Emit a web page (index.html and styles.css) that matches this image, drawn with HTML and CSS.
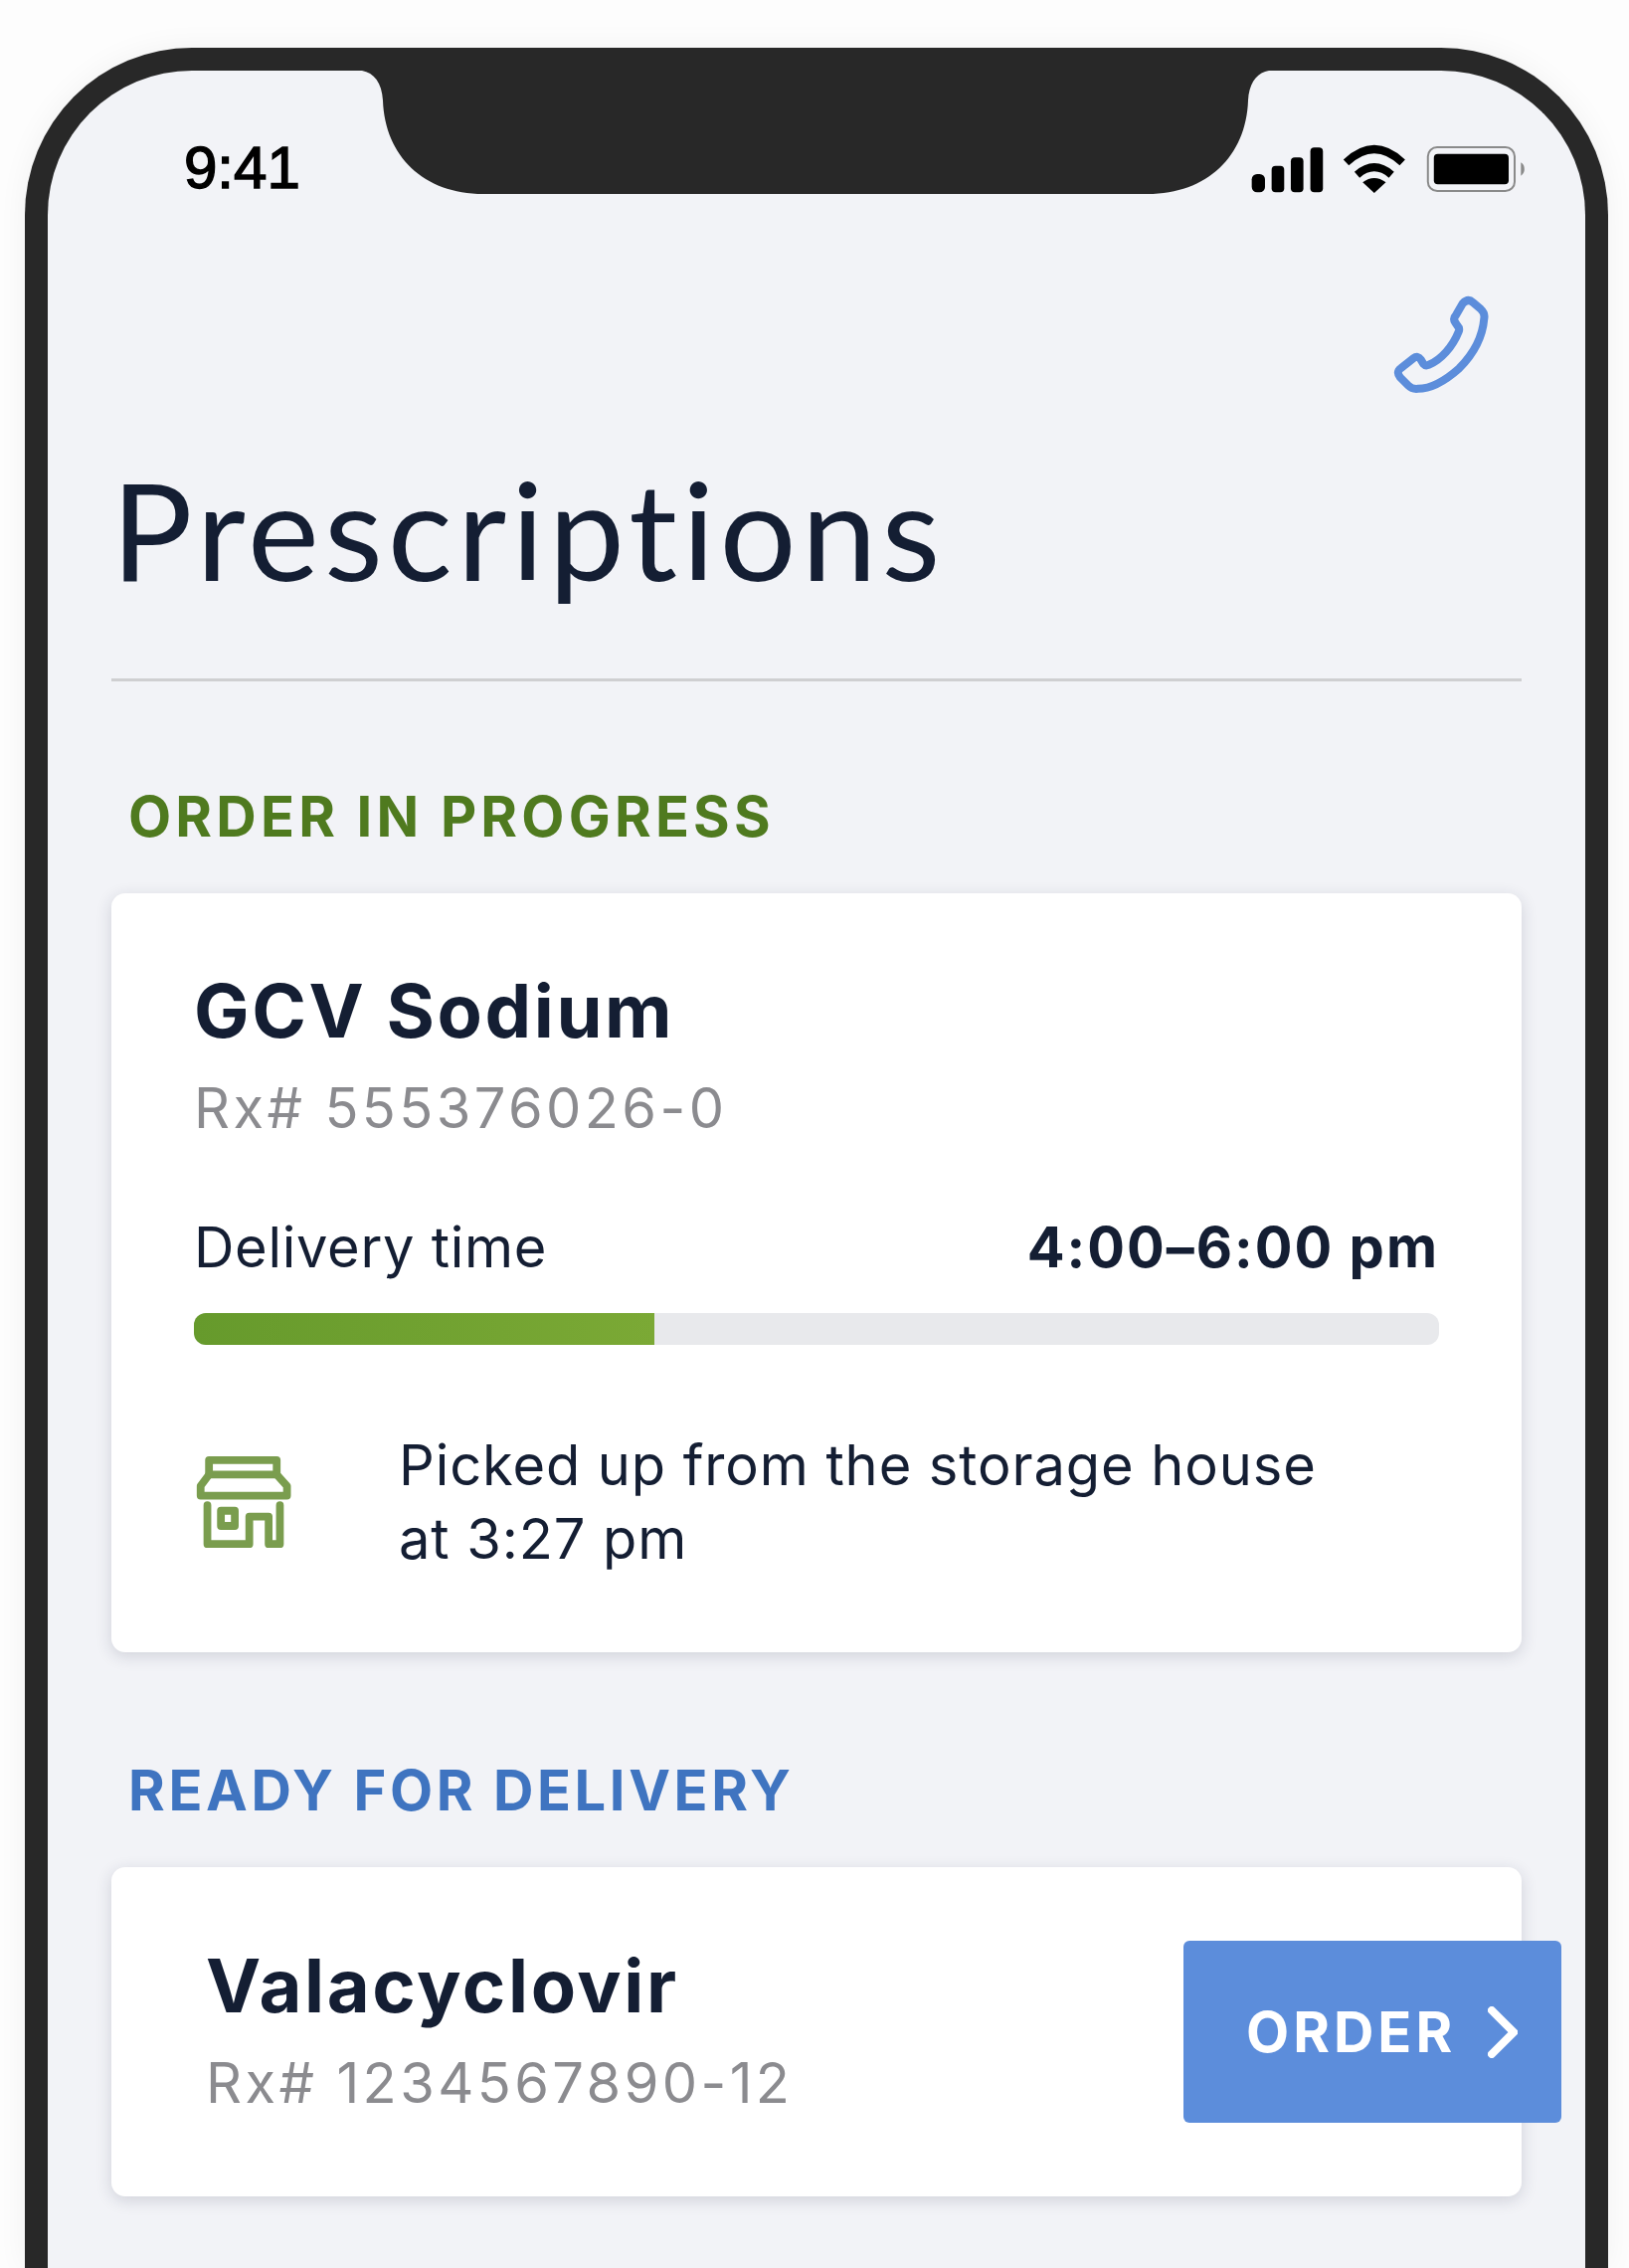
FILE: index.html
```html
<!DOCTYPE html>
<html lang="en">
<head>
    <meta charset="UTF-8">
    <meta name="viewport" content="width=device-width, initial-scale=1.0">
    <title>Prescriptions</title>
    <link rel="stylesheet" href="styles.css">
</head>
<body>
    <div class="phone">
        <svg class="notch" viewBox="0 0 912 124" aria-hidden="true">
            <path d="M0 0 C12 2 20 12 21 30 C23 86 62 124 122 124 H790 C850 124 889 86 891 30 C892 12 900 2 912 0 Z"/>
        </svg>
        <div class="screen">
            <div class="status">
                <span class="clock">9:41</span>
                <svg class="status-icons" viewBox="230 425 835 150" aria-hidden="true">
                    <rect x="235" y="515" width="40" height="55" rx="16"/>
                    <rect x="295" y="490" width="38" height="80" rx="12"/>
                    <rect x="353" y="465" width="38" height="105" rx="12"/>
                    <rect x="412" y="435" width="38" height="135" rx="12"/>
                    <path class="wifi" d="M520 480 Q605 400 690 480"/>
                    <path class="wifi" d="M553 517 Q605 472 657 517"/>
                    <path d="M570 540 Q605 514 640 540 L605 572 Z"/>
                    <rect class="batt" x="767" y="434" width="262" height="132" rx="28"/>
                    <rect x="785" y="454" width="226" height="92" rx="12"/>
                    <path class="nub" d="M1048 480 C1062 488 1062 512 1048 520 Z"/>
                </svg>
            </div>
            <div class="call-row">
                <svg class="call" viewBox="655 885 300 305" aria-hidden="true">
                    <path d="M870 915 Q886 898 902 912 L925 932 Q938 944 935 960 C930 1020 900 1070 860 1110 C815 1150 775 1172 735 1172 Q718 1174 706 1162 L682 1138 Q668 1122 684 1110 L722 1080 Q735 1070 744 1084 L752 1097 Q758 1104 768 1100 C805 1085 840 1045 858 1000 Q862 990 856 984 L848 972 Q840 960 850 950 Z"/>
                </svg>
            </div>
            <h1>Prescriptions</h1>
            <hr class="rule">

            <h2 class="section-label green">ORDER IN PROGRESS</h2>
            <div class="card card-progress">
                <div class="drug">GCV Sodium</div>
                <div class="rx">Rx# 555376026-0</div>
                <div class="delivery">
                    <span>Delivery time</span>
                    <strong>4:00–6:00 pm</strong>
                </div>
                <div class="bar"><div class="bar-fill" style="width: 37%"></div></div>
                <div class="update">
                    <svg class="store" viewBox="110 125 295 290" aria-hidden="true">
                        <path d="M150 185 V140 H360 V185 Z"/>
                        <path d="M150 185 L124 220 V250 H392 V220 L360 185"/>
                        <path d="M145 280 V400 H275 V315 H335 V400 H370 V280"/>
                        <rect x="187" y="297" width="43" height="47"/>
                    </svg>
                    <p>Picked up from the storage house<br>at 3:27 pm</p>
                </div>
            </div>

            <h2 class="section-label blue">READY FOR DELIVERY</h2>
            <div class="card card-ready">
                <div class="ready-info">
                    <div class="drug">Valacyclovir</div>
                    <div class="rx">Rx# 1234567890-12</div>
                </div>
                <button class="order" type="button">
                    ORDER
                    <svg class="chevron" viewBox="0 0 30 52" aria-hidden="true"><path d="M4 4 L26 26 L4 48"/></svg>
                </button>
            </div>
        </div>
    </div>
</body>
</html>
```

FILE: styles.css
```css
* {
    box-sizing: border-box;
}

body {
    margin: 0;
    height: 2280px;
    overflow: hidden;
    background-color: #fdfdfd;
    font-family: Inter, "Liberation Sans", sans-serif;
    color: #141e33;
}

.phone {
    position: relative;
    width: 1592px;
    height: 2232px;
    margin: 48px 0 0 25px;
    border: 23px solid #282828;
    border-bottom: none;
    border-radius: 168px 168px 0 0;
    background-color: #f2f3f7;
    box-shadow: 0 0 30px rgba(0, 0, 0, 0.05);
}

.notch {
    position: absolute;
    top: 0;
    left: 316px;
    width: 912px;
    height: 124px;
    fill: #282828;
}

.screen {
    padding: 0 64px;
}

/* status bar */
.status {
    display: flex;
    justify-content: space-between;
    align-items: flex-start;
    height: 129px;
    padding: 64px 0 0 73px;
}

.clock {
    font-family: "Liberation Sans", sans-serif;
    font-size: 60px;
    line-height: 68px;
    color: #000;
    -webkit-text-stroke: 1.5px #000;
}

.status-icons {
    width: 278px;
    height: 50px;
    margin: 10px -5px 0 0;
}

.wifi {
    fill: none;
    stroke: #000;
    stroke-width: 24px;
}

.batt {
    fill: none;
    stroke: #8a8a8a;
    stroke-width: 6px;
}

.nub {
    fill: #8a8a8a;
}

.call-row {
    display: flex;
    justify-content: flex-end;
    padding: 95px 31px 0 0;
}

.call {
    width: 100px;
    height: 102px;
    fill: none;
    stroke: #5c8ddb;
    stroke-width: 24px;
    stroke-linejoin: round;
}

h1 {
    margin: 55px 0 0;
    font-family: Lato, sans-serif;
    font-size: 136px;
    font-weight: 400;
    line-height: 160px;
    letter-spacing: 5px;
    color: #141e33;
}

.rule {
    height: 3px;
    margin: 70px 0 0;
    border: none;
    background-color: #cfcfd1;
}

.section-label {
    margin: 0;
    padding: 0 0 0 17px;
    font-size: 56px;
    font-weight: 700;
    line-height: 64px;
    letter-spacing: 4.2px;
}

.green {
    margin-top: 104px;
    color: #4f7a1f;
}

.blue {
    margin-top: 107px;
    letter-spacing: 3.6px;
    color: #3f74c0;
}

.card {
    margin-top: 45px;
    background-color: #fff;
    border-radius: 14px;
    box-shadow: 0 4px 16px rgba(30, 40, 70, 0.16);
}

.card-progress {
    height: 763px;
    padding: 78px 83px 0;
}

.drug {
    font-size: 74px;
    font-weight: 700;
    line-height: 80px;
    letter-spacing: 2.6px;
    color: #141e33;
}

.rx {
    margin-top: 26px;
    font-size: 56px;
    line-height: 64px;
    letter-spacing: 3.4px;
    color: #8b8b8f;
}

.delivery {
    display: flex;
    justify-content: space-between;
    margin-top: 76px;
    font-size: 56px;
    line-height: 64px;
    letter-spacing: 0.7px;
}

.delivery strong {
    font-weight: 700;
    letter-spacing: 2px;
}

.bar {
    height: 32px;
    margin-top: 34px;
    overflow: hidden;
    background-color: #e8e9ec;
    border-radius: 12px;
}

.bar-fill {
    height: 100%;
    background: linear-gradient(90deg, #669a2c, #7ba935);
}

.update {
    display: flex;
    align-items: center;
    gap: 108px;
    margin-top: 84px;
    padding-left: 2px;
}

.store {
    flex: none;
    width: 96px;
    height: 94px;
    fill: none;
    stroke: #7a9d4e;
    stroke-width: 24px;
    stroke-linejoin: round;
    stroke-linecap: round;
}

.update p {
    margin: 0;
    font-size: 56px;
    line-height: 74px;
    letter-spacing: 0.9px;
}

.card-ready {
    display: flex;
    align-items: center;
    justify-content: space-between;
    height: 331px;
    padding-left: 95px;
}

.ready-info {
    margin-top: -3px;
}

.order {
    display: flex;
    align-items: center;
    gap: 32px;
    flex: none;
    width: 380px;
    height: 183px;
    margin-right: -40px;
    padding: 0 0 0 63px;
    background-color: #5c8ddb;
    border: none;
    border-radius: 6px;
    font-family: Inter, sans-serif;
    font-size: 56px;
    font-weight: 700;
    letter-spacing: 4px;
    color: #fff;
}

.chevron {
    width: 30px;
    height: 52px;
    fill: none;
    stroke: #fff;
    stroke-width: 8px;
    stroke-linecap: round;
}
```
